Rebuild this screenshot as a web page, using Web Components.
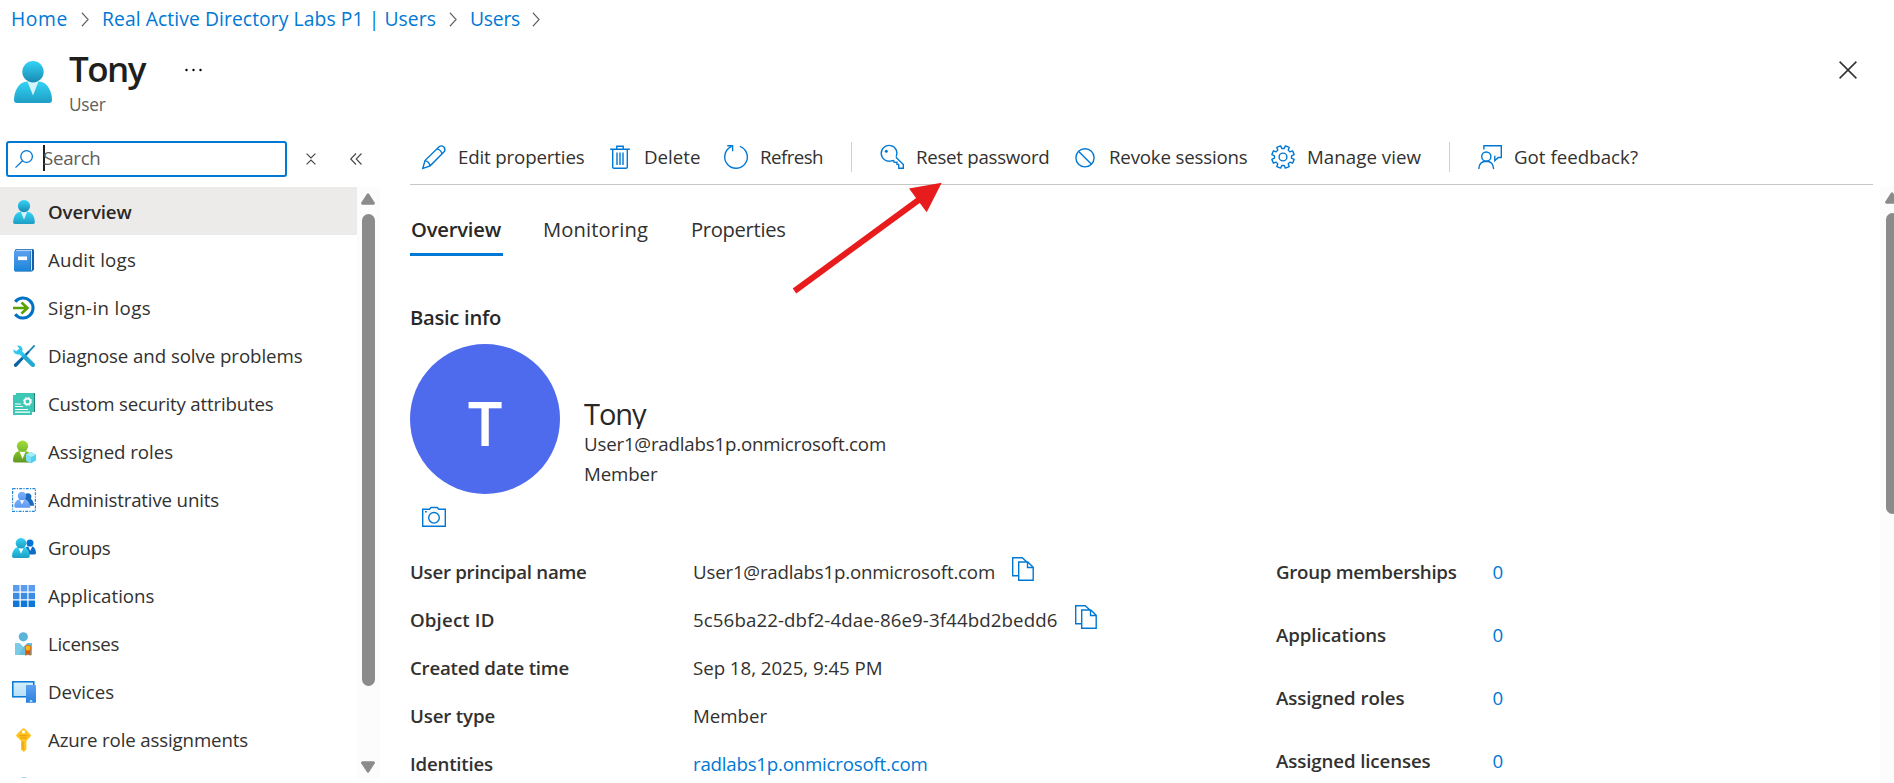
<!DOCTYPE html>
<html lang="en">
<head>
<meta charset="utf-8">
<title>Tony - User</title>
<style>
  html, body { margin: 0; height: 783px; overflow: hidden; background: #fff; }
  body { font: 400 18.7px/24px "Open Sans", "Noto Sans", sans-serif; color: #323130; }
</style>
</head>
<body>
<portal-shell></portal-shell>
<script>
const define = (name, html, setup) => customElements.define(name, class extends HTMLElement {
  connectedCallback() {
    if (this.shadowRoot) return;
    const root = this.attachShadow({ mode: 'open' });
    const t = document.createElement('template');
    t.innerHTML = typeof html === 'function' ? html(this) : html;
    root.append(t.content.cloneNode(true));
    if (setup) setup(this, root);
  }
});

/* ---------- icons ---------- */
const grad = (id, a, b) => `<linearGradient id="${id}" x1="0" y1="0" x2="0" y2="1"><stop offset="0" stop-color="${a}"/><stop offset="1" stop-color="${b}"/></linearGradient>`;
const line = 'fill="none" stroke="#0078d4" stroke-width="1.4"';
const ICONS = {
  person: ['0 0 38 42', `<defs>${grad('a','#32d4f5','#198ab3')}${grad('b','#32d4f5','#1f9dc4')}</defs>
    <path d="M3 42a3 3 0 0 1-3-3C0 30 5 20.500 13 20.500h12c8 0 13 9.500 13 18.500a3 3 0 0 1-3 3z" fill="url(#b)"/>
    <path d="M13.500 20.500L19 34.500l5.500-14z" fill="#fff" opacity=".8"/><circle cx="19" cy="10.700" r="10.700" fill="url(#a)"/>`],
  book: ['0 0 24 24', `<defs>${grad('a','#5ea0ef','#1a84d8')}</defs><path d="M4 1h16.500q1.500 0 1.500 1.500v19L20 23.500H3V2z" fill="#1160a8"/><path d="M4.500 1.800H20V22l-1 .8V3H3.500z" fill="#cfe6fa"/>
    <path d="M2 3.500q0-.8.800-.8H18.500v20.500H3q-1 0-1-1z" fill="url(#a)"/><rect x="6" y="8.500" width="9" height="3.600" fill="#fff"/>`],
  signin: ['0 0 24 24', `<path d="M3.200 5.800A10 10 0 1 1 3.200 18.200" fill="none" stroke="#0072c6" stroke-width="3"/><path d="M1 12h13M9.500 6.500L15.500 12l-6 5.500" fill="none" stroke="#57a300" stroke-width="2.600"/>`],
  tools: ['0 0 24 24', `<defs>${grad('a','#32d4f5','#0a5ea8')}</defs>
    <path d="M22.600 1.300L13.300 11.500" stroke="#1c86b5" stroke-width="1.800" fill="none"/>
    <path d="M16.600 6.400L2 20.200q-.4 1.800.7 2.500 1.200.6 2.400-.5L17.300 8.500z" fill="#0a62a8"/>
    <path d="M5 1.500Q9 .8 10.500 4.500L10.300 7.500 22.300 19.500q1.300 1.700 0 3-1.400 1.200-3-.2L7.600 10.400Q3.500 11 1.800 8.200L1.300 5.200 4.300 7.300 7.300 4.600z" fill="#32c8ec"/>
    <path d="M13 10.200L22.300 19.500q1.300 1.700 0 3-1.400 1.200-3-.2L9.900 12.900z" fill="#25a8d0"/>`],
  attrs: ['0 0 24 24', `<path d="M4 1h19v19H4z" fill="#258277"/><path d="M1 3h3V1h18v19h-2v3H1z" fill="#3cc8b4"/>
    <path d="M3 12h6M3 14.500h8M3 17.500h13M3 20.200h15" stroke="#fff" stroke-width="1.200"/><circle cx="15.500" cy="9.500" r="2.900" fill="none" stroke="#fff" stroke-width="1.700"/><circle cx="15.500" cy="9.500" r="4.200" fill="none" stroke="#fff" stroke-width="1" stroke-dasharray="1.650 1.650"/>`],
  roles: ['0 0 24 24', `<defs>${grad('a','#a4dc3a','#76bc2d')}${grad('b','#86c423','#5e9624')}</defs>
    <path d="M3 22.500q-2 0-2-2C1 15 4 11 8 11h5c4 0 7 4 7 9.500v2z" fill="url(#b)"/><path d="M7.500 11.500l3 7.500 3-7.500z" fill="#fff"/><circle cx="10.500" cy="6.200" r="5.600" fill="url(#a)"/>
    <path d="M19 12l5 2.500v6L19 23.300l-5-2.800v-6z" fill="#50d0f2"/><path d="M19 12l5 2.500-5 2.600-5-2.600z" fill="#a6ecfb"/><path d="M14 14.500l5 2.600v6.200l-5-2.800z" fill="#7ce0f8"/>`],
  units: ['0 0 24 24', `<defs>${grad('a','#7cb0fa','#5c98f2')}</defs><rect x=".6" y=".6" width="22.800" height="22.800" fill="none" stroke="#2488d8" stroke-width="1.200" stroke-dasharray="3 1.200 1.200 1.200"/>
    <path d="M12 17.800h10q-.3-5-3.500-7.200h-4z" fill="#1a68bc"/><circle cx="15.800" cy="8.800" r="3.600" fill="#1a68bc"/>
    <path d="M4 19.800q-2 0-1.700-2C2.700 13.500 5.500 11.200 8 11.200h4c3.500 0 6 3 6.300 8.600z" fill="url(#a)"/><path d="M7.800 11.400l2.200 5 2.200-5z" fill="#fff"/><circle cx="10" cy="8" r="4.200" fill="url(#a)"/>`],
  groups: ['0 0 24 24', `<defs>${grad('a','#32d4f5','#1f9dc4')}</defs><path d="M12 18.500h10q2 0 2-1.500c-.3-4-2-6.500-4-6.500h-4c-3 0-4 4-4 8z" fill="#0f6cc4"/><path d="M16.200 10.500l2 4.500 2-4.500z" fill="#fff"/><circle cx="18" cy="7" r="3.500" fill="#0072d4"/>
    <path d="M2 22q-2 0-2-1.800C.3 15 3 11 6.500 11h5c3.500 0 6 4 6.300 9q0 2-2 2z" fill="url(#a)"/><path d="M6.300 11.500L9 17.800l2.700-6.300z" fill="#fff"/><circle cx="9" cy="7.200" r="5.300" fill="url(#a)"/>`],
  grid: ['0 0 24 24', `<g fill="#5a9cee"><path d="M1 1h6.500v6.500H1zM8.800 1h6.500v6.500H8.800zM16.500 1H23v6.500h-6.500z"/></g><g fill="#3a8ce4"><path d="M1 8.800h6.500v6.500H1zM8.800 8.800h6.500v6.500H8.800zM16.500 8.800H23v6.500h-6.500z"/></g><g fill="#0f78d6"><path d="M1 16.500h6.500V23H1zM8.800 16.500h6.500V23H8.800zM16.500 16.500H23V23h-6.500z"/></g>`],
  license: ['0 0 24 24', `<circle cx="11.300" cy="4.800" r="4.600" fill="#59b4d9"/><path d="M3 11h4.500l4 4 4-4H20v12H3z" fill="#7ccbe4"/><path d="M11.500 15l4-4H20v12H7z" fill="#59b4d9" opacity=".6"/>
    <path d="M13.300 18h5.200v6l-2.600-2-2.600 2z" fill="#dd5900"/><circle cx="15.900" cy="16" r="2.900" fill="#fcb514" stroke="#dd5900" stroke-width=".8"/>`],
  devices: ['0 0 24 24', `<defs>${grad('a','#d4effc','#b4e0f8')}${grad('b','#5ea0ef','#2a82e0')}</defs><rect x=".8" y="1.800" width="21" height="15" fill="url(#a)" stroke="#0078d4" stroke-width="1.500"/><path d="M14 5h9.200q.8 0 .8.800V22q0 .8-.8.800H14z" fill="url(#b)"/><path d="M17.800 21h2.500" stroke="#fff" stroke-width="1.300"/>`],
  key: ['0 0 24 24', `<path d="M11.600.3q.8 0 1.300.5l5.600 5.700q1 1 0 2l-4.100 4.300v8.800L11.800 24 9 21.500v-8.700L4.600 8.500q-1-1 0-2L10.300.8q.5-.5 1.300-.5z" fill="#ffc31f"/><circle cx="11.500" cy="3.800" r="1.600" fill="#fff"/><path d="M7.500 7.800h8.300M8.500 10h6" stroke="#e8960a" stroke-width="1.100"/><path d="M11 13.500v8" stroke="#e8960a" stroke-width="1"/>`],
  peek: ['0 0 24 24', `<ellipse cx="12" cy="2.300" rx="3" ry="1.300" fill="#a4d0e6"/>`],
  edit: ['0 0 24 24', `<path d="M.8 23.300L3 15.600 17.300 1.600q2.300-1.600 4.500.400 2.100 2.200.5 4.600L8.200 20.800zM3 15.600q3.800.7 5.200 5.200M15 3.900q4 .9 5 5" ${line}/>`],
  trash: ['0 0 24 24', `<path d="M2.200 4.200h19.600M8.800 4V1.200h6.400V4M4.700 4.200V22q0 1.300 1.300 1.300h12q1.300 0 1.300-1.300V4.200M9 7.500V20M12 7.500V20M15 7.500V20" ${line}/>`],
  refresh: ['0 0 24 24', `<path d="M15.800 1.300A11.300 11.300 0 1 1 7.300 1.700M3.300.8H8.600V6.200" ${line}/>`],
  resetkey: ['0 0 24 24', `<path d="M16.200 11.800A7.900 7.900 0 1 0 11.300 15.900L13.600 15.500 14.200 17.400 17 17.300V19.300L18.700 19.500 18.800 23.300H23.300V19.500L15.900 12.200" ${line}/><circle cx="6.300" cy="6.300" r="1.500" fill="#0078d4"/>`],
  block: ['0 0 24 24', `<circle cx="12" cy="12.800" r="9.100" ${line}/><path d="M5.500 6.300l13 13" ${line}/>`],
  gear: ['0 0 24 24', `<circle cx="12" cy="12" r="3.900" ${line}/>`],
  feedback: ['0 0 24 24', `<path d="M5.900 4.500V.8H23.300V12.500H20.300L16.800 15.600V10.800" ${line}/><circle cx="8.300" cy="11.600" r="4.600" ${line}/><path d="M.8 24Q1 16.300 8.300 16.200 15.300 16.300 15.600 24" ${line}/>`],
  camera: ['0 0 24 24', `<path d="M.7 4.200H7.500L9 2.500h6.200l1.500 1.700h6.600V21.300H.7z" ${line}/><circle cx="12" cy="12.800" r="5.300" ${line}/><path d="M3 6.800h1.800" ${line}/>`],
  copy: ['0 0 22 24', `<path d="M6.500 18.800H.7V.7H10.200L15.500 5.500M6.700 5H15.800L21.200 10.300V23.300H6.700zM15.500 5v5.500h5.700" ${line}/>`],
  search: ['0 0 18 18', `<circle cx="11.600" cy="6.500" r="5.800" fill="none" stroke="#0078d4" stroke-width="1.300"/><path d="M7.500 10.700L.5 17.600" stroke="#0078d4" stroke-width="1.300"/>`],
  collapse: ['0 0 10 12', `<path d="M.6.600L5 5 9.400.6M.6 11.400L5 7l4.400 4.400" fill="none" stroke="#484644" stroke-width="1.150"/>`],
  dblchev: ['0 0 12 12', `<path d="M6 .5L.7 6 6 11.500M11.500.5L6.200 6l5.300 5.500" fill="none" stroke="#484644" stroke-width="1.100"/>`],
  chev: ['0 0 9 15', `<path d="M1 .8l7 6.700-7 6.700" fill="none" stroke="#605e5c" stroke-width="1.200"/>`],
  dots: ['0 0 17 4', `<circle cx="1.500" cy="2" r="1.200"/><circle cx="8.500" cy="2" r="1.200"/><circle cx="15.500" cy="2" r="1.200"/>`],
  close: ['0 0 18 18', `<path d="M.6.600l16.800 16.800M17.400.6L.6 17.400" stroke="#323130" stroke-width="1.500"/>`]
};
/* The settings cog: eight square teeth around a rounded rim. */
(() => {
  const pts = [];
  for (let i = 0; i < 8; i++) {
    const c = i * 45 + 22.5;
    for (const [d, r] of [[-14.5, 8.600], [-10.5, 11.400], [10.5, 11.400], [14.5, 8.600]]) {
      const a = (c + d) * Math.PI / 180;
      pts.push((12 + r * Math.cos(a)).toFixed(2) + ' ' + (12 + r * Math.sin(a)).toFixed(2));
    }
  }
  ICONS.gear[1] += `<path d="M${pts.join('L')}Z" stroke-linejoin="round" ${line}/>`;
})();

define('ui-icon', el => {
  const [box, body] = ICONS[el.getAttribute('name')];
  const w = el.getAttribute('w') || 24, h = el.getAttribute('h') || w;
  return `<style>:host{display:block;flex:none;width:${w}px;height:${h}px}svg{display:block;width:100%;height:100%;overflow:visible}</style>
    <svg viewBox="${box}" preserveAspectRatio="${w === h || box.startsWith('0 0 38') ? 'xMidYMid meet' : 'none'}">${body}</svg>`;
});

define('scroll-track', `<style>
  :host{display:flex;flex-direction:column;align-items:center;box-sizing:border-box;flex:none;background:#fcfcfc;padding:6px 0 5px}
  svg{display:block;flex:none;width:14px;height:12px;fill:#8b8b8b}
  i{display:block;flex:none;width:13px;height:var(--thumb);margin-top:9px;border-radius:7px;background:#8b8b8b}
  .end{margin-top:auto}
  :host([open]) .end{display:none}</style>
  <svg viewBox="0 0 14 12"><path d="M6 .7q1-1 2 0l5.800 9q.6 1.800-1.300 2h-11Q-.4 11.500.2 9.700z"/></svg><i></i>
  <svg class="end" viewBox="0 0 14 12"><path d="M6 11.300q1 1 2 0l5.800-9Q14.400.500 12.500.300h-11Q-.4.500.2 2.300z"/></svg>`);

define('crumb-bar', `<style>
  :host{display:flex;align-items:center;box-sizing:border-box;height:39px;padding:0 0 1px 11px;color:#0078d4;flex:none;font-size:19.300px}
  ui-icon{margin:1px 13px 0 13px}
  .last{margin-left:13px}</style>
  <fit-text w="57">Home</fit-text><ui-icon name="chev" w="8" h="15"></ui-icon>
  <fit-text w="334">Real Active Directory Labs P1 | Users</fit-text><ui-icon name="chev" w="8" h="15"></ui-icon>
  <fit-text w="50">Users</fit-text><ui-icon name="chev" w="8" h="15" style="margin-left:12px"></ui-icon>`);

define('blade-header', `<style>
  :host{display:flex;height:91px;flex:none;box-sizing:border-box;padding:0 37px 0 14px}
  .avatar{margin-top:22px}
  .names{margin-left:17px}
  h1{margin:8px 0 0;font-size:35px;line-height:44px;font-weight:600;color:#201f1e;height:44px}
  p{margin:3px 0 0;font-size:17.300px;line-height:22px;color:#605e5c}
  .more{margin:29px 0 0 40px}
  .close{margin:22px 0 0 auto}</style>
  <ui-icon class="avatar" name="person" w="38" h="42"></ui-icon>
  <div class="names"><h1><fit-text w="76">Tony</fit-text></h1><p><fit-text w="36.500">User</fit-text></p></div>
  <ui-icon class="more" name="dots" w="17" h="4"></ui-icon>
  <ui-icon class="close" name="close" w="18"></ui-icon>`);

define('search-box', `<style>
  :host{display:flex;height:57px;align-items:flex-start;flex:none}
  .box{display:flex;box-sizing:border-box;width:281px;height:36px;margin:11px 0 0 6px;border:2px solid #0078d4;border-radius:3px;padding-left:7px;align-items:center;color:#605e5c}
  .caret{width:2px;height:26px;background:#201f1e;margin:-2px -2px 0 10px;flex:none}
  fit-text{margin-top:-2px}</style>
  <div class="box"><ui-icon name="search" w="18"></ui-icon><div class="caret"></div><fit-text w="57.500">Search</fit-text></div>
  <ui-icon name="collapse" w="10" h="12" style="margin:23px 0 0 19px"></ui-icon>
  <ui-icon name="dblchev" w="12" h="12" style="margin:23px 0 0 34px"></ui-icon>`);

define('nav-item', el => `<style>
  :host{display:flex;box-sizing:border-box;height:48px;align-items:center;padding:2px 0 0 12px;flex:none}
  :host([selected]){background:#edebe9;font-weight:600;color:#292827}
  fit-text{margin-left:12px}</style>
  <ui-icon name="${el.getAttribute('icon')}" w="24"></ui-icon><fit-text w="${el.getAttribute('w')}"><slot></slot></fit-text>`);

define('side-nav', `<style>
  :host{display:flex;flex-direction:column;width:380px;flex:none}
  .row{display:flex;height:591px}
  .list{display:flex;flex-direction:column;flex:1;overflow:hidden}
  scroll-track{width:23px;padding-right:1px;--thumb:472px}</style>
  <search-box></search-box>
  <div class="row"><div class="list">
    <nav-item icon="person" selected w="83.500">Overview</nav-item>
    <nav-item icon="book" w="88">Audit logs</nav-item>
    <nav-item icon="signin" w="103">Sign-in logs</nav-item>
    <nav-item icon="tools" w="254.500">Diagnose and solve problems</nav-item>
    <nav-item icon="attrs" w="225.500">Custom security attributes</nav-item>
    <nav-item icon="roles" w="125">Assigned roles</nav-item>
    <nav-item icon="units" w="171">Administrative units</nav-item>
    <nav-item icon="groups" w="62.500">Groups</nav-item>
    <nav-item icon="grid" w="106.500">Applications</nav-item>
    <nav-item icon="license" w="71">Licenses</nav-item>
    <nav-item icon="devices" w="66">Devices</nav-item>
    <nav-item icon="key" w="200">Azure role assignments</nav-item>
    <nav-item icon="peek" w="10"></nav-item>
  </div><scroll-track></scroll-track></div>`);

define('cmd-button', el => `<style>:host{display:flex;align-items:center;gap:12px;flex:none}</style>
  <ui-icon name="${el.getAttribute('icon')}"></ui-icon><fit-text w="${el.getAttribute('w')}"><slot></slot></fit-text>`);

define('command-bar', `<style>
  :host{display:flex;align-items:center;box-sizing:border-box;height:55px;width:1463px;padding-left:12px;border-bottom:1px solid #c8c6c4;gap:23.500px;flex:none}
  i{width:1px;height:30px;background:#d2d0ce;margin:0 4.500px;flex:none}</style>
  <cmd-button icon="edit" w="126.500">Edit properties</cmd-button>
  <cmd-button icon="trash" w="56.500">Delete</cmd-button>
  <cmd-button icon="refresh" w="63">Refresh</cmd-button><i></i>
  <cmd-button icon="resetkey" w="133.500">Reset password</cmd-button>
  <cmd-button icon="block" w="138.500">Revoke sessions</cmd-button>
  <cmd-button icon="gear" w="114">Manage view</cmd-button><i></i>
  <cmd-button icon="feedback" w="124">Got feedback?</cmd-button>`);

define('tab-strip', `<style>
  :host{display:flex;gap:40px;margin-top:28px;height:43px;font-size:20.200px;line-height:32px}
  div{padding:0 1px}
  .on{font-weight:600;color:#292827;padding:0 2px 0 1px;border-bottom:3px solid #0078d4;height:40px}</style>
  <div class="on"><fit-text w="90">Overview</fit-text></div><div style="margin-left:-1px"><fit-text w="105">Monitoring</fit-text></div><div style="margin-left:1px"><fit-text w="94.500">Properties</fit-text></div>`);

define('profile-card', `<style>
  :host{display:flex;height:150px;margin-top:13px}
  .disc{width:150px;height:150px;border-radius:50%;background:#4f6bed;color:#fff;display:flex;justify-content:center;font-size:61.500px;font-weight:600;line-height:156px;flex:none}
  .who{margin-left:24px;padding-top:54px}
  .name{font-size:29px;line-height:32px;height:31px;overflow:hidden;color:#292827}
  .l{height:30px;line-height:30px}</style>
  <div class="disc">T</div>
  <div class="who"><div class="name"><fit-text w="61.500">Tony</fit-text></div>
  <div class="l"><fit-text w="302">User1@radlabs1p.onmicrosoft.com</fit-text></div>
  <div class="l"><fit-text w="73.500">Member</fit-text></div></div>`);

define('prop-row', el => `<style>
  :host{display:flex;align-items:center;height:48px}
  .k{width:var(--key,283px);flex:none;font-weight:600}
  :host([link]) .v{color:#0078d4}
  ui-icon{margin:-6px 0 0 17px}</style>
  <div class="k"><fit-text w="${el.getAttribute('kw')}">${el.getAttribute('label')}</fit-text></div>
  <div class="v"><fit-text w="${el.getAttribute('w')}"><slot></slot></fit-text></div>
  ${el.hasAttribute('copy') ? '<ui-icon name="copy" w="22" h="24"></ui-icon>' : ''}`);

define('prop-grid', `<style>
  :host{display:grid;grid-template-columns:866px auto;padding-top:19px}
  .b{--key:216.500px;display:flex;flex-direction:column;gap:15px}</style>
  <div>
    <prop-row label="User principal name" kw="176.500" w="302" copy>User1@radlabs1p.onmicrosoft.com</prop-row>
    <prop-row label="Object ID" kw="84.500" w="364.500" copy>5c56ba22-dbf2-4dae-86e9-3f44bd2bedd6</prop-row>
    <prop-row label="Created date time" kw="159" w="189.500">Sep 18, 2025, 9:45 PM</prop-row>
    <prop-row label="User type" kw="85" w="74">Member</prop-row>
    <prop-row label="Identities" kw="83" w="234.500" link>radlabs1p.onmicrosoft.com</prop-row>
  </div>
  <div class="b">
    <prop-row label="Group memberships" kw="180.500" w="11" link>0</prop-row>
    <prop-row label="Applications" kw="110" w="11" link>0</prop-row>
    <prop-row label="Assigned roles" kw="128.500" w="11" link>0</prop-row>
    <prop-row label="Assigned licenses" kw="154.500" w="11" link>0</prop-row>
  </div>`);

define('user-overview', `<style>
  :host{display:flex;flex-direction:column;flex:1;padding-left:30px;min-width:0}
  .view{display:flex;height:598px;overflow:hidden}
  .body{width:1470px;flex:none}
  h2{margin:47px 0 0;font-size:20.200px;line-height:28px;font-weight:600;color:#292827}
  .cam{margin:11px 0 0 12px}
  scroll-track{width:24px;margin-top:1px;--thumb:301px}</style>
  <command-bar></command-bar>
  <div class="view"><div class="body">
    <tab-strip></tab-strip>
    <h2><fit-text w="91">Basic info</fit-text></h2>
    <profile-card></profile-card>
    <ui-icon class="cam" name="camera"></ui-icon>
    <prop-grid></prop-grid>
  </div><scroll-track open></scroll-track></div>`);

define('callout-arrow', `<style>:host{position:absolute;left:790px;top:180px;width:156px;height:116px}svg{display:block;width:100%;height:100%}</style>
  <svg viewBox="790 180 156 116"><path d="M794.500 291L920 199" stroke="#e81c1c" stroke-width="6"/><path d="M941.700 182.700L909 188.500 926.700 212.200z" fill="#e81c1c"/></svg>`);

define('portal-shell', `<style>
  :host{display:flex;flex-direction:column;position:relative;width:1894px;height:783px;overflow:hidden;background:#fff}
  .main{display:flex;flex:1;min-height:0}</style>
  <crumb-bar></crumb-bar><blade-header></blade-header>
  <div class="main"><side-nav></side-nav><user-overview></user-overview></div>
  <callout-arrow></callout-arrow>`);

/* A single-line text whose tracking is tuned so that it fills a given width. */
define('fit-text', `<style>:host{display:block;white-space:nowrap;flex:none}span{display:inline-block;vertical-align:top}</style><span><slot></slot></span>`, (el, root) => {
  const w = parseFloat(el.getAttribute('w'));
  const slot = root.querySelector('slot');
  const n = slot.assignedNodes({ flatten: true }).map(x => x.textContent).join('').length;
  const span = root.querySelector('span');
  if (n > 1) span.style.letterSpacing = ((w - span.getBoundingClientRect().width) / n).toFixed(3) + 'px';
  el.style.width = w + 'px';
});
</script>
</body>
</html>
